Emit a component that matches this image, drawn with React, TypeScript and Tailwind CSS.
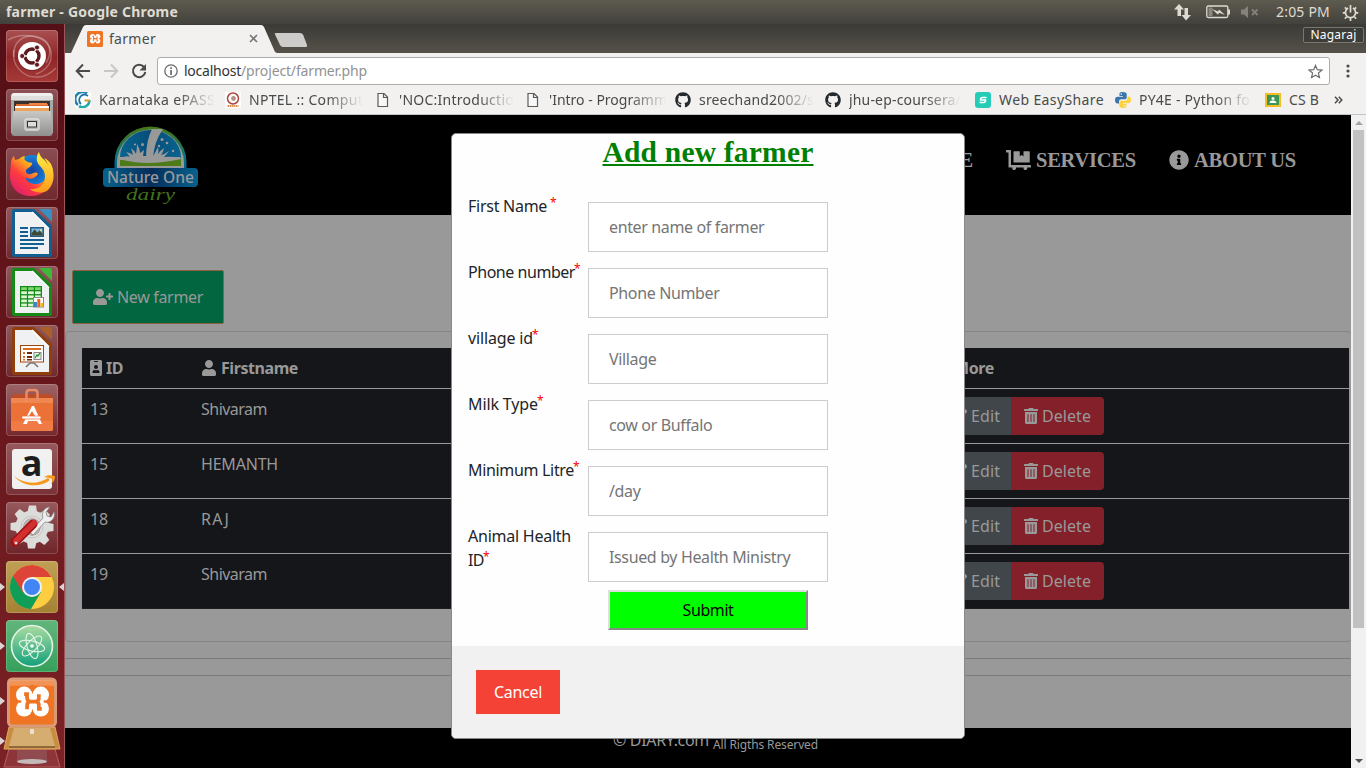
import { useLayoutEffect, useRef, useState } from "react";
import type { ReactNode } from "react";
import {
  FaDollyFlatbed,
  FaGithub,
  FaIdBadge,
  FaInfoCircle,
  FaPen,
  FaTrashAlt,
  FaUser,
  FaUserPlus,
} from "react-icons/fa";

type TextProps = { w: number; className?: string; children: ReactNode };

/** Single line of text, tracked so that it takes up `w` pixels. */
function T({ w, className = "", children }: TextProps) {
  const ref = useRef<HTMLSpanElement>(null);
  const [spacing, setSpacing] = useState(0);
  useLayoutEffect(() => {
    const el = ref.current;
    if (!el) return;
    const count = (el.textContent ?? "").length || 1;
    setSpacing((prev) => prev + (w - el.getBoundingClientRect().width) / count);
  }, [w]);
  return (
    <span ref={ref} className={`inline-block shrink-0 whitespace-pre ${className}`} style={{ letterSpacing: spacing }}>
      {children}
    </span>
  );
}

/* ---------- Launcher ---------- */

function UbuntuIcon() {
  return (
    <svg viewBox="0 0 52 52" className="size-full">
      <g fill="none" stroke="#fff" strokeOpacity=".28" strokeWidth="1.5">
        <path d="M8 27C6 12 18 3 32 7c12 3 15 15 8 26" />
        <path d="M2 10C16 2 38 5 44 18c4 12-2 22-14 26" />
        <path d="M8 20c-3 14 8 28 24 27 8 0 14-5 18-9" />
      </g>
      <circle cx="26" cy="27" r="14" fill="#000" opacity=".25" />
      <circle cx="26" cy="26" r="14" fill="#fff" />
      <circle cx="26" cy="26" r="7" fill="none" stroke="#5e1a1e" strokeWidth="3.4" />
      <g stroke="#fff" strokeWidth="1.3">
        <path d="M26 26 13 26M26 26l6.500 -11.300M26 26l6.500 11.300" />
      </g>
      <circle cx="26" cy="26" r="5" fill="#fff" />
      <g fill="#5e1a1e" stroke="#fff" strokeWidth=".8">
        <circle cx="16.200" cy="26" r="2.500" />
        <circle cx="31" cy="17.500" r="2.500" />
        <circle cx="31" cy="34.700" r="2.500" />
      </g>
    </svg>
  );
}

function FilesIcon() {
  return (
    <svg viewBox="0 0 52 52" className="size-full">
      <defs>
        <linearGradient id="cab" x2="0" y2="1">
          <stop stopColor="#c9c9c8" />
          <stop offset="1" stopColor="#8f8f8e" />
        </linearGradient>
        <linearGradient id="cabtop" x2="0" y2="1">
          <stop stopColor="#f1f1f0" />
          <stop offset="1" stopColor="#c8c8c7" />
        </linearGradient>
      </defs>
      <path d="M5 8q0-4 3-4h36q3 0 3 4v36H5z" fill="url(#cabtop)" />
      <path d="M5 9h42v34H5z" fill="#a9a9a8" />
      <path d="M5 7h42v4H5z" fill="#dededd" />
      <path d="M8 12h36v11H8z" fill="#3a302c" />
      <path d="M10 15h32v8H10z" fill="#d86a2d" />
      <path d="M23 14h18v2H23z" fill="#ef8647" />
      <path d="M9 17h34v2H9z" fill="#fff" />
      <path d="M9 19h34v5H9z" fill="#eda35a" />
      <path d="M7 22h38l1.500 22q0 3-3 3h-35q-3 0-3-3z" fill="url(#cab)" />
      <rect x="19" y="30" width="14" height="11" rx="2" fill="#b8b8b7" stroke="#dedede" strokeWidth="1.300" />
      <rect x="21.500" y="32.500" width="9" height="5.500" fill="#ddd" stroke="#333" />
    </svg>
  );
}

function FirefoxIcon() {
  return (
    <svg viewBox="0 0 52 52" className="size-full">
      <defs>
        <linearGradient id="fx" x1="1" y1="0" x2="0.100" y2="1">
          <stop stopColor="#ffe83d" />
          <stop offset=".4" stopColor="#ffab1c" />
          <stop offset=".65" stopColor="#ff3a3f" />
          <stop offset="1" stopColor="#d91a79" />
        </linearGradient>
        <radialGradient id="fb">
          <stop stopColor="#1b3f9c" />
          <stop offset="1" stopColor="#1684dc" />
        </radialGradient>
        <linearGradient id="fy" x2="0" y2="1">
          <stop stopColor="#fff044" />
          <stop offset="1" stopColor="#ff9a1b" />
        </linearGradient>
      </defs>
      <circle cx="26" cy="23" r="16" fill="url(#fb)" />
      <path
        d="M5 15c0-3 1-5 3-7l1 4c1 0 3-1 4-1 2-2 4-3 6-3-1 2-1 4 1 5 2 2 5 1 6 2 1 3-5 5-6 7-1 3 2 5 5 4 3-1 5-3 7 0-3 5-9 6-13 3 3 10 20 10 24-4 1-6-2-11-5-15 6 2 10 9 9 17-2 14-11 21-22 21C11 48 3 38 4 25z"
        fill="url(#fx)"
      />
      <path
        d="M33 4c1 6 6 7 10 14l1-3c6 11 4 21-2 27-5 4-14 3-18-1 10 1 15-5 15-13 0-9-10-11-8-19 0-2 1-4 2-5z"
        fill="url(#fy)"
      />
    </svg>
  );
}

function OfficeIcon({ color, light, kind }: { color: string; light: string; kind: "doc" | "sheet" | "show" }) {
  return (
    <svg viewBox="0 0 52 52" className="size-full">
      <path d="M6 4q0-2 2-2h20l18 17v29q0 2-2 2H8q-2 0-2-2z" fill={color} />
      <path d="M33 2h11q2 0 2 2v11z" fill={light} />
      <path d="M9 5h18l16 16v26H9z" fill="#f0f1f2" />
      <path d="M26 5v0l17 17" stroke="#fff" strokeWidth="1.500" />
      {kind === "doc" && (
        <g fill={color}>
          <path d="M14 20h8v2h-8zM14 24h8v2h-8zM14 28h8v2h-8zM14 32h24v2H14zM14 36h24v2H14zM14 40h18v2H14z" />
          <path d="M24 20h14v10H24z" fill="#245a83" />
          <path d="M25.500 21.500h11v7h-11z" fill="#76b6df" />
          <path d="M25.500 28.500v-2l3-4 3 3 2-2 3 3v2z" fill="#3e4a32" />
          <circle cx="35" cy="23" r="1" fill="#ffe16b" />
        </g>
      )}
      {kind === "sheet" && (
        <g>
          <path d="M14 20h22v21H14z" fill="#148a17" />
          {[0, 1, 2, 3, 4].map((r) =>
            [0, 1, 2].map((c) => (
              <rect key={`${r}${c}`} x={15.200 + c * 6.900} y={21.200 + r * 4.100} width="5.700" height="2.800" fill={r ? "#d9f8d3" : "#7ed76f"} />
            )),
          )}
          <rect x="27.500" y="31.500" width="10" height="9.500" fill="#fff" stroke="#888" />
          <path d="M28 36h3v5h-3z" fill="#3a88c9" />
          <path d="M31.300 33h3v8h-3z" fill="#e8651b" />
          <path d="M34.600 37h2.600v4h-2.600z" fill="#f4b71c" />
        </g>
      )}
      {kind === "show" && (
        <g>
          <rect x="14.500" y="20.500" width="23" height="16.500" fill="#fff" stroke="#a3440f" />
          <path d="M17 23h18v2H17zM17 27h2v2h-2zM17 31h2v2h-2zM17 34h2v1.500h-2z" fill="#dd6b24" />
          <path d="M21 27h5v2h-5zM21 31h5v2h-5zM21 34h5v1.500h-5z" fill="#6b2b0c" />
          <rect x="28" y="27.500" width="7" height="7" fill="#eee" stroke="#888" />
          <path d="m29 33 2-3 1 1 2-3" stroke="#13952b" fill="none" strokeWidth="1.200" />
          <path d="M24 38h4l4 4M24 38l-4 4" stroke="#777" fill="none" strokeWidth="1.600" />
        </g>
      )}
    </svg>
  );
}

function SoftwareIcon() {
  return (
    <svg viewBox="0 0 52 52" className="size-full">
      <path d="M5 14 8 10h37l2 4z" fill="#bc4d28" />
      <path d="M5 14h42v31q0 2-2 2H7q-2 0-2-2z" fill="#ec7136" />
      <path d="M5 14h42v5H5z" fill="#f08650" />
      <path d="M5 37h42v8q0 2-2 2H7q-2 0-2-2z" fill="#f07b45" />
      <path d="M20.500 17.500V9q0-3 3-3h5q3 0 3 3v8.500" fill="none" stroke="#e98b64" strokeWidth="2.500" />
      <path d="m26 22-9 18h4l1-3h9l2 3h3l-8-18zm0 5 3 5h-6z" fill="#fff" fillRule="evenodd" />
      <path d="M16 32h18q1 0 1 1.500T34 35H16z" fill="#fff" stroke="#ea6f35" strokeWidth=".7" />
    </svg>
  );
}

function AmazonIcon() {
  return (
    <svg viewBox="0 0 52 52" className="size-full">
      <rect x="6" y="6" width="40" height="40" rx="3" fill="#f1f1f1" />
      <text x="25.500" y="33" textAnchor="middle" fontSize="36" fontWeight="bold" fill="#1d1d1d" fontFamily="Open Sans, sans-serif">
        a
      </text>
      <path d="M8 33c10 8 23 9 34 2l2 2c-11 9-28 6-36-4z" fill="#f79a1c" />
      <path d="M38 34c3-2 7-2 11-1 0 3-1 6-4 8 1-3 2-4 1-5-1-1-4-1-8-2z" fill="#f79a1c" />
    </svg>
  );
}

function SettingsIcon() {
  return (
    <svg viewBox="0 0 52 52" className="size-full">
      <g fill="#dcdcda">
        {[0, 45, 90, 135, 180, 225, 270, 315].map((a) => (
          <path key={a} d="M21.500 10 23 3.500h7L31 10z" transform={`rotate(${a} 26 25)`} />
        ))}
      </g>
      <circle cx="26" cy="25" r="12.500" fill="none" stroke="#dcdcda" strokeWidth="8" />
      <circle cx="26" cy="25" r="8.500" fill="#b9b0b0" />
      <circle cx="26" cy="25" r="11" fill="none" stroke="#c6c5c4" />
      <path d="M24 30 37 16c-2-6 2-11 7-11l-4 5 1 4 4 1 3-5c2 6-4 12-9 10L27 33z" fill="#eee" stroke="#888" strokeWidth=".8" />
      <path d="M27 22 9 40" stroke="#a11212" strokeWidth="9" strokeLinecap="round" />
      <path d="M28 21 10 39" stroke="#d23030" strokeWidth="6" strokeLinecap="round" />
      <circle cx="10" cy="41" r="1.500" fill="#ddd" />
    </svg>
  );
}

function ChromeIcon() {
  return (
    <svg viewBox="0 0 52 52" className="size-full">
      <circle cx="26" cy="26" r="22" fill="#ffcd40" />
      <path d="M26 26 35 31 25 48A22 22 0 0 1 6.900 15z" fill="#109d58" />
      <path d="M6.900 15A22 22 0 0 1 45.500 16H26L16.500 31z" fill="#dc4437" />
      <circle cx="26" cy="26" r="10" fill="#f1f1f1" />
      <circle cx="26" cy="26" r="8" fill="#4285f4" />
    </svg>
  );
}

function AtomIcon() {
  return (
    <svg viewBox="0 0 52 52" className="size-full">
      <defs>
        <linearGradient id="atom" x2="0" y2="1">
          <stop stopColor="#a9dca0" />
          <stop offset="1" stopColor="#12a07a" />
        </linearGradient>
      </defs>
      <circle cx="26" cy="26" r="20.500" fill="url(#atom)" stroke="#e5f4e9" strokeWidth="1.600" />
      <g fill="none" stroke="#e5f4e9" strokeWidth="1.100">
        <ellipse cx="26" cy="26" rx="13" ry="5" transform="rotate(14 26 26)" />
        <ellipse cx="26" cy="26" rx="13" ry="5" transform="rotate(74 26 26)" />
        <ellipse cx="26" cy="26" rx="13" ry="5" transform="rotate(134 26 26)" />
      </g>
      <circle cx="26" cy="26" r="1.800" fill="#fff" />
    </svg>
  );
}

function XamppMark() {
  return (
    <g>
      <g fill="#fff">
        <circle cx="18" cy="18" r="8.300" />
        <circle cx="35" cy="18" r="8.300" />
        <circle cx="18" cy="32" r="8.300" />
        <circle cx="35" cy="32" r="8.300" />
        <path d="M16 17h21v16H16z" />
      </g>
      <path d="M26.500 8v6M26.500 36v6" stroke="#ef7424" strokeWidth="3" />
      <path d="M18 17.500h3v4q0 3.500 3.500 3.500h5q3.500 0 3.500-3.500v-4M21 33v-4q0-4 3-4M30 25q3 0 3 4v3.500h3" fill="none" stroke="#ef7424" strokeWidth="3.800" />
      <path d="M9 25h5M39 25h5" stroke="#ef7424" strokeWidth="2.500" strokeLinecap="round" />
    </g>
  );
}

function XamppIcon() {
  return (
    <svg viewBox="0 0 52 52" className="size-full">
      <rect x="2" y="2" width="48" height="48" rx="4" fill="#ef7424" stroke="#d99a78" strokeWidth="3" />
      <path d="M3 6q0-3 3-3h40q3 0 3 3v3H3z" fill="#fff" opacity=".22" />
      <XamppMark />
    </svg>
  );
}

const launcher: { name: string; icon: ReactNode; tile: string; running?: boolean; focused?: boolean }[] = [
  { name: "dash", icon: <UbuntuIcon />, tile: "bg-linear-to-b from-[#a95052] via-[#8f2427] to-[#a53a38]" },
  { name: "files", icon: <FilesIcon />, tile: "bg-linear-to-b from-[#8d5257] to-[#6e262b]" },
  { name: "firefox", icon: <FirefoxIcon />, tile: "bg-linear-to-b from-[#8b4d53] to-[#6f292f]" },
  { name: "writer", icon: <OfficeIcon color="#126092" light="#3a8fc0" kind="doc" />, tile: "bg-linear-to-b from-[#90585c] to-[#6f292f]" },
  { name: "calc", icon: <OfficeIcon color="#168a16" light="#3fb838" kind="sheet" />, tile: "bg-linear-to-b from-[#90585c] to-[#6f292f]" },
  { name: "impress", icon: <OfficeIcon color="#8f3e0c" light="#ab602c" kind="show" />, tile: "bg-linear-to-b from-[#90585c] to-[#6f292f]" },
  { name: "software", icon: <SoftwareIcon />, tile: "bg-linear-to-b from-[#9a6466] to-[#74282d]" },
  { name: "amazon", icon: <AmazonIcon />, tile: "bg-linear-to-b from-[#96595d] to-[#793237]" },
  { name: "settings", icon: <SettingsIcon />, tile: "bg-linear-to-b from-[#96595d] to-[#6f2429]" },
  { name: "chrome", icon: <ChromeIcon />, tile: "bg-linear-to-b from-[#c0a056] to-[#a58232]", running: true, focused: true },
  { name: "atom", icon: <AtomIcon />, tile: "bg-linear-to-b from-[#62b67b] to-[#34a05b]", running: true },
];

function Launcher() {
  return (
    <aside className="relative flex w-[65px] shrink-0 flex-col items-center overflow-hidden border-r border-[#9d5458] bg-linear-to-b from-[#550f16] via-[#68171c] to-[#7b2226] pt-1.5">
      <div className="flex flex-col gap-[7px]">
        {launcher.map((item) => (
          <div key={item.name} className="relative flex h-[52px] w-[64px] justify-center">
            {item.running && <i className="absolute top-[22px] left-0 border-y-4 border-l-[5px] border-y-transparent border-l-[#dcd3d3]" />}
            {item.focused && <i className="absolute top-[22px] right-0 border-y-4 border-r-[5px] border-y-transparent border-r-[#dcd3d3]" />}
            <div className={`size-[52px] rounded-[4px] shadow-[inset_0_0_0_1px_rgba(255,255,255,0.18)] ${item.tile}`}>{item.icon}</div>
          </div>
        ))}
      </div>
      <svg viewBox="0 0 64 96" className="absolute top-[648px] left-0 h-[96px] w-[64px]">
        <path d="M9 77h46l5 18H4z" fill="#8c3438" stroke="#b36063" />
        <path d="M17 78h30v12q-15 5-30 0z" fill="#8f4b50" />
        <ellipse cx="32" cy="89.500" rx="15" ry="2.500" fill="#c3b9b9" />
        <path d="M9 55h46l5 22H4z" fill="#c88d43" stroke="#e2a85f" />
        <path d="M14 56h36l5 18H9z" fill="#d6ad70" />
        <path d="M9 74h46v2H9z" fill="#8f6a38" />
        <path d="M30 57h4v5h-4z" fill="#eadfcf" />
        <path d="M0 25l5 4-5 4zM0 65l5 4-5 4z" fill="#dcd3d3" />
      </svg>
      <div className="absolute top-[653px] left-[5px] h-[51px] w-[54px]">
        <XamppIcon />
      </div>
    </aside>
  );
}

/* ---------- Desktop panel ---------- */

function TopPanel() {
  return (
    <header className="flex h-6 shrink-0 items-center bg-linear-to-b from-[#5e5b50] to-[#42413c] px-1.5 text-[#dfdbd2]">
      <T w={172} className="text-[14px] leading-6 font-bold">farmer - Google Chrome</T>
      <svg viewBox="0 0 18 18" className="ml-auto h-[18px] w-[18px]" fill="#dfdbd2">
        <path d="M5 1 10 6.500H7V13H3.500V6.500H0z" />
        <path d="M12 17.500 7.500 12h3V5h3.500v7h3z" />
      </svg>
      <svg viewBox="0 0 25 14" className="ml-3.5 h-[14px] w-[25px]">
        <rect x=".8" y="1" width="21" height="11.500" rx="1.500" fill="none" stroke="#dfdbd2" strokeWidth="1.300" />
        <path d="M22 4.500h2v5h-2z" fill="#dfdbd2" />
        <path d="M2.500 2.500h4v8.500h-4z" fill="#8b887f" />
        <path d="m6 4 6 2.500 1-2 6 5.500-6-2.200-1 2z" fill="#dfdbd2" />
      </svg>
      <svg viewBox="0 0 18 12" className="ml-2.5 h-3 w-[18px]" fill="#85827b">
        <path d="M0 3.500h3L7 0v12L3 8.500H0z" />
        <path d="m11 3.500 5.500 5.500M16.500 3.500 11 9" stroke="#85827b" strokeWidth="1.800" />
      </svg>
      <T w={54} className="ml-[17px] text-[14px] leading-6">2:05 PM</T>
      <svg viewBox="0 0 18 18" className="mr-px ml-[12px] size-[17px]" fill="none" stroke="#dfdbd2">
        <path d="M6.500 4.200a5.400 5.400 0 1 0 5 0" strokeWidth="1.800" />
        <path d="M9 1v8" strokeWidth="1.800" />
        <path d="M.8 9.500H4M14 9.500h3.200M3 3.500l2 2M15 3.500l-2 2M3 15.500l2-2M15 15.500l-2-2M9 14.500V18" strokeWidth="1.800" />
      </svg>
    </header>
  );
}

/* ---------- Browser chrome ---------- */

function TabStrip() {
  return (
    <div className="flex h-[29px] shrink-0 items-start bg-linear-to-b from-[#3b3a36] to-[#56524a]">
      <div className="relative ml-[6px] h-[29px] w-[206px]">
        <svg viewBox="0 0 206 29" className="absolute inset-0 h-[29px] w-[206px]">
          <path d="M0 29 12 3q1-2 3-2h175q2 0 3 2l11 25 2 1z" fill="#f2f1f0" />
        </svg>
        <div className="relative flex h-[29px] items-center pl-4">
          <svg viewBox="0 0 52 52" className="size-4">
            <rect width="52" height="52" rx="5" fill="#ef7424" />
            <XamppMark />
          </svg>
          <T w={47} className="ml-1.5 text-[14px] leading-5 text-[#4c4c4c]">farmer</T>
          <svg viewBox="0 0 9 9" className="ml-[93px] size-[9px]">
            <path d="m1 1 7 7M8 1 1 8" stroke="#777" strokeWidth="1.600" />
          </svg>
        </div>
      </div>
      <svg viewBox="0 0 34 16" className="-ml-[3px] mt-[7.500px] h-4 w-[34px]">
        <path d="M2 1h24q2 0 3 1.500L33 13q.5 2-1 2H9q-2 0-3-2L1 2.500Q0 1 2 1z" fill="#cdccca" />
      </svg>
      <div className="mt-[3px] mr-[2px] ml-auto flex h-4 w-[61px] items-center justify-center rounded-[2px] border border-[#7a776f] bg-[#3d3c38] text-white">
        <T w={46} className="text-[12px] leading-[14px]">Nagaraj</T>
      </div>
    </div>
  );
}

function Toolbar() {
  return (
    <div className="flex h-[33px] shrink-0 items-center bg-[#f2f1f0] pt-[3px] pl-[10px]">
      <svg viewBox="0 0 16 16" className="size-4" fill="none" stroke="#4a4a4a" strokeWidth="2">
        <path d="M15 8H2.500M8 1.500 1.700 8 8 14.500" />
      </svg>
      <svg viewBox="0 0 16 16" className="ml-3 size-4" fill="none" stroke="#c8c7c6" strokeWidth="2">
        <path d="M1 8h12.500M8 1.500 14.300 8 8 14.500" />
      </svg>
      <svg viewBox="0 0 16 16" className="ml-3 size-4" fill="none" stroke="#4a4a4a" strokeWidth="2">
        <path d="M13 4a6.200 6.200 0 1 0 1.300 5" />
        <path d="M15 1v6.500H8.500z" fill="#4a4a4a" stroke="none" />
      </svg>
      <div className="ml-[10px] flex h-7 w-[1173px] items-center rounded-[3px] border border-[#adacab] bg-white pr-1.5 pl-1.5">
        <svg viewBox="0 0 14 14" className="size-3.5">
          <circle cx="7" cy="7" r="6.200" fill="none" stroke="#6a6a6a" strokeWidth="1.300" />
          <path d="M6.200 3.200h1.700v1.700H6.200zM6.200 6h1.700v5H6.200z" fill="#6a6a6a" />
        </svg>
        <T w={57} className="ml-1.5 text-[14px] leading-5 text-[#333]">localhost</T>
        <T w={126} className="text-[14px] leading-5 text-[#929292]">/project/farmer.php</T>
        <svg viewBox="0 0 16 16" className="ml-auto size-[15px]">
          <path d="m8 1.500 1.900 4.600 4.900.4-3.700 3.200 1.100 4.800L8 12l-4.200 2.500 1.100-4.800L1.200 6.500l4.900-.4z" fill="none" stroke="#6f6f6f" strokeWidth="1.300" />
        </svg>
      </div>
      <svg viewBox="0 0 4 14" className="ml-4 h-3.5 w-1" fill="#4a4a4a">
        <circle cx="2" cy="2" r="1.600" />
        <circle cx="2" cy="7" r="1.600" />
        <circle cx="2" cy="12" r="1.600" />
      </svg>
    </div>
  );
}

function PageGlyph() {
  return (
    <svg viewBox="0 0 16 16" className="size-4">
      <path d="M3 1.500h6l3.500 3.500v9.500H3zM8.500 1.500v4h4" fill="#f8f8f8" stroke="#5c5c5c" strokeWidth="1.200" />
    </svg>
  );
}

const fade = "[mask-image:linear-gradient(to_right,black_68%,transparent)]";

const bookmarks: { text: string; w: number; clip: string; slot: string; icon: ReactNode }[] = [
  {
    text: "Karnataka ePASS",
    w: 116,
    clip: `w-[116px] ${fade}`,
    slot: "w-[150px]",
    icon: (
      <svg viewBox="0 0 16 16" className="size-4">
        <path d="M0 0h16v16H0z" fill="#fff" />
        <path d="M12 1.500A7 7 0 0 0 3 13" fill="none" stroke="#1e84b0" strokeWidth="2.500" />
        <path d="M13 4A5 5 0 0 0 6 12" fill="none" stroke="#1e6fa8" strokeWidth="1.800" />
        <path d="M4 14.200a7 7 0 0 0 10.500-6" fill="none" stroke="#1eaaa5" strokeWidth="2.500" />
        <path d="M9.500 8.500h5.500" stroke="#e5922b" strokeWidth="2" />
      </svg>
    ),
  },
  {
    text: "NPTEL :: Comput",
    w: 114,
    clip: `w-[114px] ${fade}`,
    slot: "w-[150px]",
    icon: (
      <svg viewBox="0 0 16 16" className="size-4">
        <path d="M0 0h16v16H0z" fill="#fff" />
        <circle cx="8" cy="6.500" r="5.500" fill="none" stroke="#b0443c" strokeWidth="1.500" />
        <circle cx="8.500" cy="6.500" r="2.400" fill="#b58f85" />
        <path d="M2.500 14h11" stroke="#df8f4c" strokeWidth="2" strokeDasharray="1.600 .5" />
      </svg>
    ),
  },
  { text: "'NOC:Introductio", w: 115, clip: `w-[115px] ${fade}`, slot: "w-[150px]", icon: <PageGlyph /> },
  { text: "'Intro - Programm", w: 118, clip: `w-[118px] ${fade}`, slot: "w-[150px]", icon: <PageGlyph /> },
  { text: "sreechand2002/s", w: 115, clip: `w-[115px] ${fade}`, slot: "w-[150px]", icon: <FaGithub className="size-4 text-[#24292e]" /> },
  { text: "jhu-ep-coursera/", w: 112, clip: `w-[112px] ${fade}`, slot: "w-[150px]", icon: <FaGithub className="size-4 text-[#24292e]" /> },
  {
    text: "Web EasyShare",
    w: 105,
    clip: "w-[106px]",
    slot: "w-[140px]",
    icon: (
      <svg viewBox="0 0 16 16" className="size-4">
        <rect width="16" height="16" rx="3" fill="#25cdb8" />
        <path d="M11.500 5.500H7.500a2 2 0 0 0-2 2.500h5a2 2 0 0 1-2 2.500h-4" fill="none" stroke="#fff" strokeWidth="1.600" />
      </svg>
    ),
  },
  {
    text: "PY4E - Python fo",
    w: 111,
    clip: `w-[112px] ${fade}`,
    slot: "w-[150px]",
    icon: (
      <svg viewBox="0 0 16 16" className="size-4">
        <path d="M7.500 0C4.500 0 4.500 1.200 4.500 2v2H8v.8H2.500C1 4.800 0 6 0 8s1 3.500 2.300 3.500H4V9.500C4 8 5 7.300 6.500 7.300H10c1 0 1.700-.8 1.700-1.800V2C11.700.7 10 0 7.500 0z" fill="#3b76ab" />
        <path d="M8.500 16c3 0 3-1.200 3-2v-2H8v-.8h5.500C15 11.200 16 10 16 8s-1-3.500-2.300-3.500H12.500v2c0 1.500-1 2.200-2.500 2.200H6c-1 0-1.700.8-1.700 1.800V14c0 1.300 1.700 2 4.200 2z" fill="#fdd23d" />
        <circle cx="6.300" cy="2" r=".7" fill="#fff" />
        <circle cx="9.700" cy="14" r=".7" fill="#fff" />
      </svg>
    ),
  },
  {
    text: "CS B",
    w: 30,
    clip: "w-[31px]",
    slot: "w-[68px]",
    icon: (
      <svg viewBox="0 0 16 16" className="size-4">
        <path d="M0 1h16v14H0z" fill="#f7bd22" />
        <path d="M2 3h12v10H2z" fill="#3c9655" />
        <circle cx="8" cy="6.500" r="1.500" fill="#fff" />
        <path d="M4.500 11q0-2.500 3.500-2.500t3.500 2.500z" fill="#fff" />
      </svg>
    ),
  },
];

function BookmarksBar() {
  return (
    <div className="flex h-[29px] shrink-0 items-center border-b border-[#c5c4c3] bg-[#f2f1f0] pl-[10px] text-[14px] leading-5 text-[#4a4a4a]">
      {bookmarks.map((b) => (
        <div key={b.text} className={`flex shrink-0 items-center gap-2 ${b.slot}`}>
          {b.icon}
          <div className={`flex h-5 overflow-hidden ${b.clip}`}>
            <T w={b.w}>{b.text}</T>
          </div>
        </div>
      ))}
      <svg viewBox="0 0 9 8" className="ml-px h-2 w-[9px]" fill="none" stroke="#4a4a4a" strokeWidth="1.500">
        <path d="m1 .8 3 3.200-3 3.200M4.800.8l3 3.200-3 3.200" />
      </svg>
    </div>
  );
}

/* ---------- Page ---------- */

function DairyLogo() {
  return (
    <svg viewBox="0 0 98 84" className="h-[84px] w-[98px]">
      <defs>
        <linearGradient id="arc" x2="0" y2="1">
          <stop stopColor="#457a1b" />
          <stop offset=".35" stopColor="#2c7440" />
          <stop offset=".65" stopColor="#087783" />
          <stop offset="1" stopColor="#0a5b8c" />
        </linearGradient>
        <linearGradient id="band">
          <stop stopColor="#07628e" />
          <stop offset=".5" stopColor="#062d5b" />
          <stop offset="1" stopColor="#07628e" />
        </linearGradient>
        <linearGradient id="sky">
          <stop stopColor="#07648f" />
          <stop offset=".5" stopColor="#084c7a" />
          <stop offset="1" stopColor="#07648f" />
        </linearGradient>
      </defs>
      <path d="M12.500 46V36a36 35.500 0 0 1 72 0v10z" fill="url(#arc)" />
      <path d="M15 44V37a33.500 33.500 0 0 1 67 0v7z" fill="#999" />
      <path d="M18 31a30.500 27 0 0 1 61 0v4H18z" fill="url(#sky)" />
      <path d="M50 3h11Q52 16 51 32h-7Q44 15 50 3z" fill="#999" />
      <path d="M18 32q8-3 10-1-2-3-4-5 5 1 7 3-1-4-2-7 4 3 5 6 1-5 1-10 3 5 3 9l4-3-1 6h10q2-3 5-9 1 4 0 7 3-4 6-6-1 5-3 7 4-1 8-4-3 4-5 6 8-1 17 1v5H18z" fill="#999" />
      <g fill="#999">
        <circle cx="40.500" cy="18.500" r="1.500" />
        <circle cx="33" cy="18.500" r="1.100" />
        <circle cx="60" cy="13.500" r="1.500" />
        <circle cx="65" cy="17" r="1.300" />
        <circle cx="57" cy="20" r="1.200" />
        <circle cx="71" cy="25" r="1.200" />
      </g>
      <path d="M18 34q30 2 61-1v7H18z" fill="#4c7b18" />
      <path d="M18 33q13 4 28 4t33-4l-1-2H18z" fill="#999" />
      <rect x="1" y="42" width="95" height="19" rx="4" fill="url(#band)" />
      <text x="48.500" y="57" textAnchor="middle" textLength="87" lengthAdjust="spacingAndGlyphs" fontFamily="Noto Sans, sans-serif" fontSize="15.500" fontWeight="500" fill="#999">
        Nature One
      </text>
      <text x="24" y="73.500" textLength="49" lengthAdjust="spacingAndGlyphs" fontFamily="Liberation Serif, serif" fontStyle="italic" fontSize="17" fill="#44701c">
        dairy
      </text>
    </svg>
  );
}

function SiteHeader() {
  return (
    <div className="flex h-[100px] items-start bg-black pr-[55px] pl-[37px] text-[#999]">
      <div className="mt-[11px]">
        <DairyLogo />
      </div>
      <nav className="mt-[30px] ml-auto flex items-center font-['Liberation_Serif',serif] text-[20.5px] leading-[30px] font-bold">
        <T w={64} className="mr-[33px]">HOME</T>
        <FaDollyFlatbed className="mr-[5px] h-5 w-[25px]" />
        <T w={100} className="mr-[33px]">SERVICES</T>
        <FaInfoCircle className="mr-[5px] size-5" />
        <T w={102}>ABOUT US</T>
      </nav>
    </div>
  );
}

const farmers = [
  { id: "13", name: "Shivaram", w: 66 },
  { id: "15", name: "HEMANTH", w: 77 },
  { id: "18", name: "RAJ", w: 29 },
  { id: "19", name: "Shivaram", w: 66 },
];

function FarmerTable() {
  return (
    <div className="mr-[2px] ml-4 bg-[#141619] text-[16px] leading-6 text-[#999]">
      <div className="grid h-10 grid-cols-[111px_746px_1fr] items-center pl-2 font-bold">
        <div className="flex items-center gap-1">
          <FaIdBadge className="h-4 w-3" />
          <T w={17}>ID</T>
        </div>
        <div className="flex items-center gap-1">
          <FaUser className="size-4" />
          <T w={77}>Firstname</T>
        </div>
        <div className="flex pl-[7px]">
          <T w={40}>More</T>
        </div>
      </div>
      {farmers.map((f) => (
        <div key={f.id} className="grid h-[55px] grid-cols-[111px_738px_1fr] border-t border-[#999] pt-2 pl-2">
          <div className="flex items-start"><T w={18}>{f.id}</T></div>
          <div className="flex items-start"><T w={f.w}>{f.name}</T></div>
          <div className="flex h-[38px]">
            <div className="flex w-[72px] items-center gap-1 rounded-l bg-[#41464b] pl-3">
              <FaPen className="size-4" />
              <T w={29}>Edit</T>
            </div>
            <div className="flex w-[93px] items-center gap-1 rounded-r bg-[#842029] pl-[13px]">
              <FaTrashAlt className="h-4 w-3.5" />
              <T w={49}>Delete</T>
            </div>
          </div>
        </div>
      ))}
      <div className="h-px bg-[#1d2023]" />
    </div>
  );
}

const fields = [
  { label: "First Name ", w: 83, placeholder: "enter name of farmer" },
  { label: "Phone number", w: 107, placeholder: "Phone Number" },
  { label: "village id", w: 65, placeholder: "Village" },
  { label: "Milk Type", w: 70, placeholder: "cow or Buffalo" },
  { label: "Minimum Litre", w: 106, placeholder: "/day" },
  { label: "Animal Health", w: 103, second: "ID", placeholder: "Issued by Health Ministry" },
];

function Star() {
  return <span className="-mt-[3px] -ml-px text-[12px] leading-6 text-[#ff0000]">*</span>;
}

function AddFarmerModal() {
  return (
    <div className="absolute inset-0 flex items-start justify-center pt-[18px]">
      <form className="flex h-[606px] w-[514px] flex-col overflow-hidden rounded-[5px] border border-[#888] bg-[#fefefe] text-[16px] leading-6 text-[#212529]">
        <h3 className="flex h-[52px] justify-center font-['Liberation_Serif',serif] text-[29.5px] leading-[36px] font-bold text-[#008000] underline">
          <T w={211}>Add new farmer</T>
        </h3>
        <div className="flex flex-col px-4">
          {fields.map((f) => (
            <div key={f.label} className="flex h-[66px]">
              <div className="w-[120px] pt-2">
                <div className="flex h-6">
                  <T w={f.w}>{f.label}</T>
                  {!f.second && <Star />}
                </div>
                {f.second && (
                  <div className="flex h-6">
                    <T w={16}>{f.second}</T>
                    <Star />
                  </div>
                )}
              </div>
              <input
                className="mt-4 h-[50px] w-[240px] border border-[#ccc] bg-white px-5 text-[16px] tracking-[-0.36px] placeholder:text-[#757575]"
                placeholder={f.placeholder}
              />
            </div>
          ))}
        </div>
        <button type="button" className="mt-2 ml-[156px] flex h-10 w-[200px] items-center justify-center border-2 border-t-[#dedede] border-r-[#888] border-b-[#888] border-l-[#dedede] bg-[#00ff00] text-black">
          <T w={51}>Submit</T>
        </button>
        <div className="mt-4 flex flex-1 bg-[#f1f1f1] pt-6 pl-6">
          <button type="button" className="flex h-11 w-[84px] items-center justify-center bg-[#f44336] text-white">
            <T w={48}>Cancel</T>
          </button>
        </div>
      </form>
    </div>
  );
}

function Page() {
  return (
    <div className="relative flex w-[1286px] shrink-0 flex-col overflow-hidden bg-[#999]">
      <SiteHeader />
      <div className="mt-[55px] ml-[7px] flex h-[54px] w-[152px] items-center rounded-[2px] border border-[#8b6043] bg-[#026641] pl-5 text-[16px] text-[#999]">
        <FaUserPlus className="h-4 w-5" />
        <T w={86} className="ml-1">New farmer</T>
      </div>
      <div className="mt-[7px] -mr-px h-[311px] rounded-[4px] border border-[#858585] pt-4">
        <FarmerTable />
      </div>
      <div className="mt-4 h-px bg-[#7b7b7b]" />
      <div className="mt-4 h-px bg-[#7b7b7b]" />
      <footer className="mt-[52px] flex h-10 bg-black pl-[548px] text-[#999]">
        <T w={96} className="text-[16px] leading-[24px]">© DIARY.com</T>
        <T w={105} className="ml-1 text-[12px] leading-[33px]">All Rigths Reserved</T>
      </footer>
      <AddFarmerModal />
    </div>
  );
}

function Scrollbar() {
  return (
    <div className="flex w-[15px] flex-col items-center bg-[#f1f1f1]">
      <div className="flex h-[15px] items-center">
        <i className="border-x-4 border-b-4 border-x-transparent border-b-[#a3a3a3]" />
      </div>
      <div className="h-[498px] w-[11px] bg-[#c1c1c1]" />
      <div className="mt-auto flex h-[15px] items-center">
        <i className="border-x-4 border-t-4 border-x-transparent border-t-[#505050]" />
      </div>
    </div>
  );
}

export default function App() {
  return (
    <div className="flex h-[768px] w-[1366px] flex-col overflow-hidden font-['Noto_Sans',sans-serif]">
      <TopPanel />
      <div className="flex h-[744px]">
        <Launcher />
        <main className="flex w-[1301px] flex-col">
          <TabStrip />
          <Toolbar />
          <BookmarksBar />
          <div className="flex h-[653px]">
            <Page />
            <Scrollbar />
          </div>
        </main>
      </div>
    </div>
  );
}
